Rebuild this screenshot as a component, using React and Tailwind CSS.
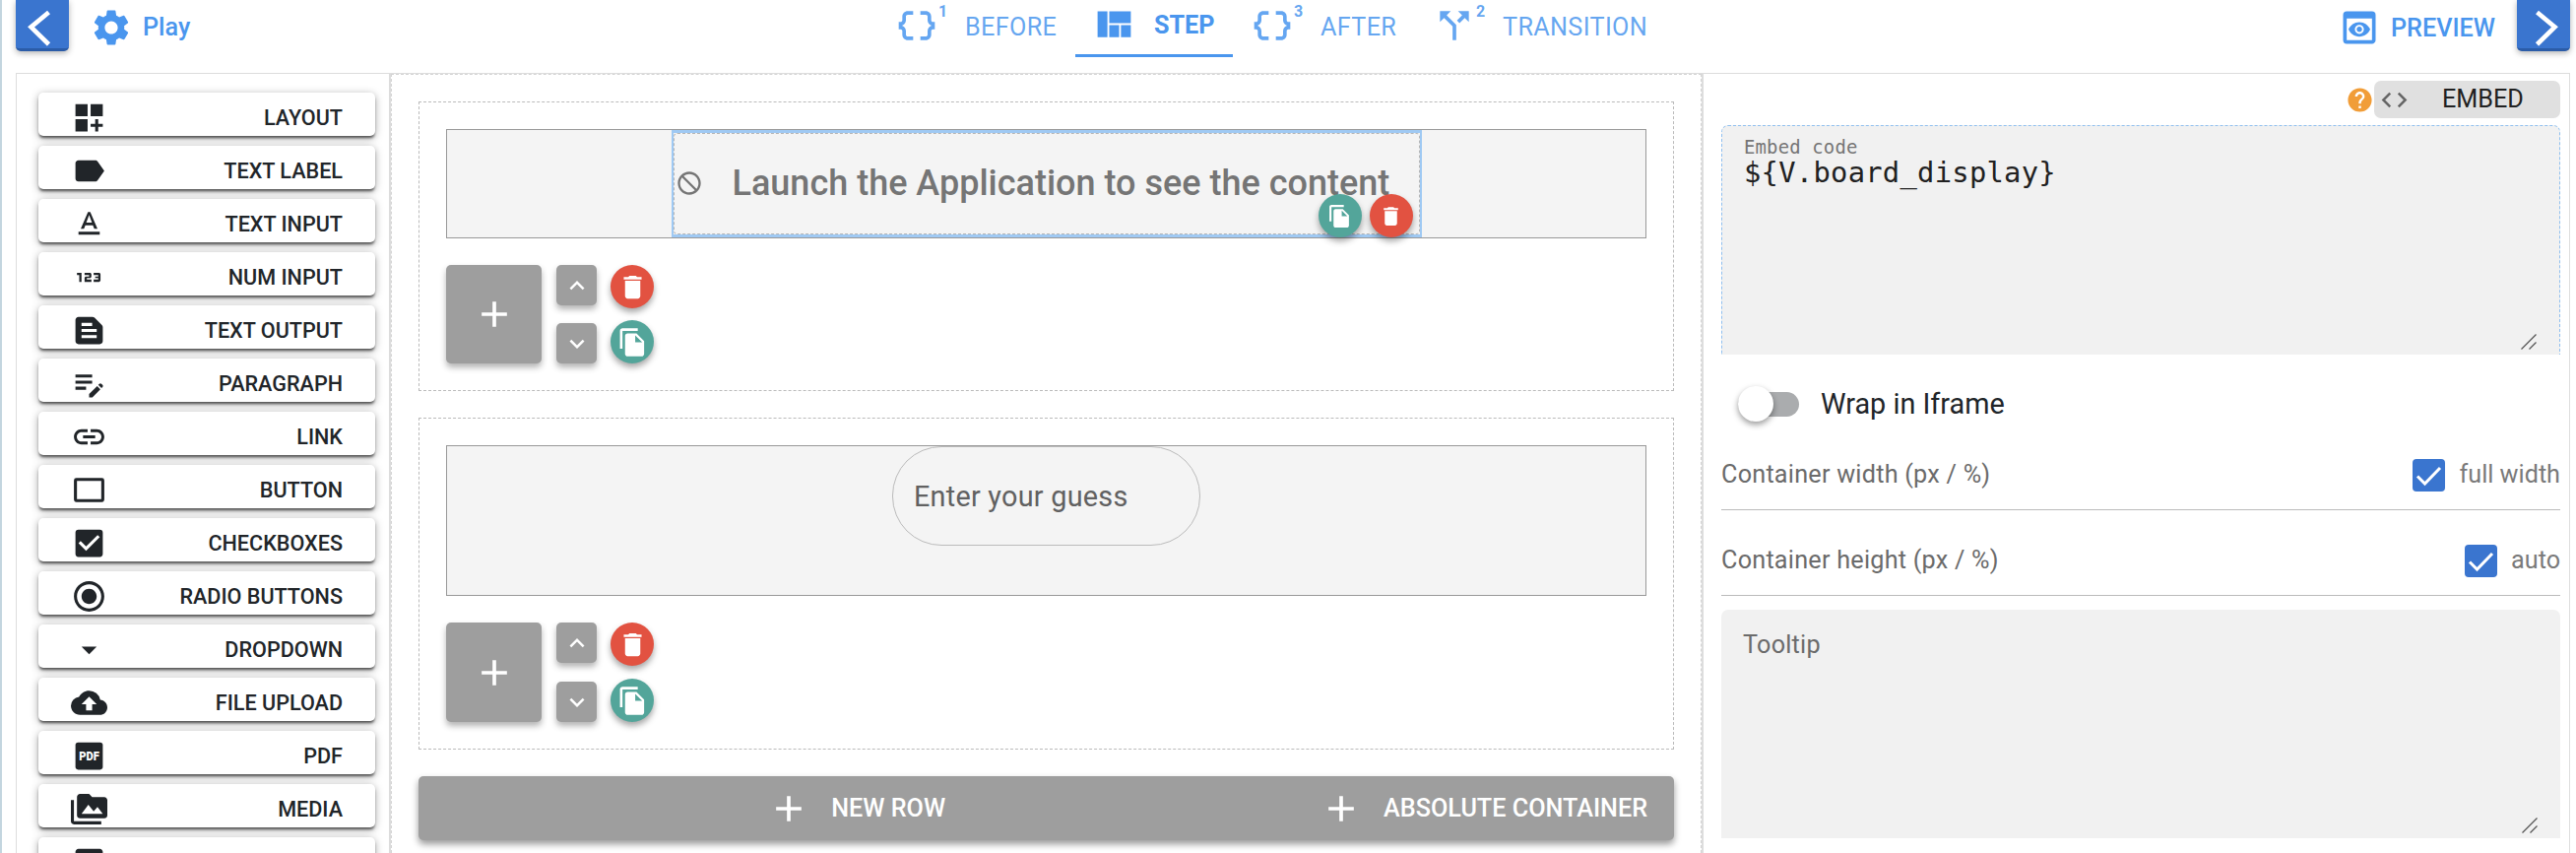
import {
    MdSettings, MdDataObject, MdViewQuilt, MdCallSplit, MdPreview, MdDashboardCustomize, MdLabel,
    MdTextFormat, Md123, MdTextSnippet, MdEditNote, MdLink, MdCheckBox, MdRadioButtonChecked,
    MdArrowDropDown, MdBackup, MdPermMedia, MdImage, MdHelp, MdCode, MdNotInterested, MdFileCopy,
    MdDelete, MdAdd, MdKeyboardArrowUp, MdKeyboardArrowDown,
} from 'react-icons/md'

function RectangleIcon({ size }) {
    return (
        <svg width={size} height={size} viewBox="0 0 24 24" fill="none" stroke="currentColor" strokeWidth="2">
            <rect x="3" y="5" width="18" height="14" rx="0.6" />
        </svg>
    )
}

function PdfIcon({ size }) {
    return (
        <svg width={size} height={size} viewBox="0 0 24 24">
            <rect x="3" y="3" width="18" height="18" rx="1.8" fill="currentColor" />
            <text x="12" y="15.1" textAnchor="middle" textLength="13.4" lengthAdjust="spacingAndGlyphs" className="fill-white font-['Roboto',sans-serif] text-[8.6px] font-black">PDF</text>
        </svg>
    )
}

const elements = [
    { label: 'LAYOUT', Icon: MdDashboardCustomize },
    { label: 'TEXT LABEL', Icon: MdLabel },
    { label: 'TEXT INPUT', Icon: MdTextFormat },
    { label: 'NUM INPUT', Icon: Md123 },
    { label: 'TEXT OUTPUT', Icon: MdTextSnippet },
    { label: 'PARAGRAPH', Icon: MdEditNote },
    { label: 'LINK', Icon: MdLink },
    { label: 'BUTTON', Icon: RectangleIcon },
    { label: 'CHECKBOXES', Icon: MdCheckBox },
    { label: 'RADIO BUTTONS', Icon: MdRadioButtonChecked },
    { label: 'DROPDOWN', Icon: MdArrowDropDown },
    { label: 'FILE UPLOAD', Icon: MdBackup },
    { label: 'PDF', Icon: PdfIcon },
    { label: 'MEDIA', Icon: MdPermMedia },
    { label: '', Icon: MdImage },
]

function NavButton({ points }) {
    return (
        <button className="h-[52px] w-[54px] rounded-b-[5px] border-b-[3px] border-[#2b5ca8] bg-[#3a75cf] shadow-[0_2px_6px_rgba(0,0,0,0.3)]">
            <svg className="mt-[3px]" width="54" height="49" viewBox="0 0 54 49" fill="none" stroke="white" strokeWidth="4.6">
                <polyline points={points} />
            </svg>
        </button>
    )
}

function Tab({ Icon, label, count, className }) {
    return (
        <div className={`flex h-[51px] items-center text-[#4a96ee]/85 ${className}`}>
            <Icon size={44} className="shrink-0" />
            <sup className="top-0 w-[27px] self-start pt-1 text-base leading-4 font-bold">{count}</sup>
            <span className="pt-1 text-[25.2px] leading-8 tracking-[0.35px]">{label}</span>
        </div>
    )
}

function Header() {
    return (
        <header className="flex h-[74px] shrink-0 items-start pl-3.5 pr-1.5">
            <NavButton points="33.5,9.5 15.5,24.5 33.5,42" />
            <div className="ml-[21px] flex h-14 w-[818px] items-center gap-2.5 text-[#4a96ee]">
                <MdSettings size={44} />
                <span className="text-[25.2px] leading-8 font-medium">Play</span>
            </div>
            <Tab Icon={MdDataObject} label="BEFORE" count="1" className="w-[183px]" />
            <div className="flex h-[58px] w-40 items-center gap-[18px] border-b-[3px] border-[#4a96ee] pb-[7px] pl-[17px] text-[#4a96ee]">
                <MdViewQuilt size={45} />
                <span className="pt-1 text-[25.2px] leading-8 font-bold">STEP</span>
            </div>
            <Tab Icon={MdDataObject} label="AFTER" count="3" className="w-[203px] pl-[18px]" />
            <Tab Icon={MdCallSplit} label="TRANSITION" count="2" />
            <div className="ml-auto flex h-14 items-center gap-2.5 text-[#4a96ee]">
                <MdPreview size={44} />
                <span className="pt-0.5 text-[25.2px] leading-8 font-medium">PREVIEW</span>
            </div>
            <div className="ml-[22px]">
                <NavButton points="20.5,9.5 38.5,24.5 20.5,42" />
            </div>
        </header>
    )
}

function Sidebar() {
    return (
        <aside className="flex w-[381px] shrink-0 flex-col gap-2.5 border-l border-r-2 border-[#ddd] border-r-[#dcdcdc] pl-[22px] pt-[19px] pr-3.5">
            {elements.map(({ label, Icon }, i) => (
                <button
                    key={i}
                    className="flex h-11 w-[342px] shrink-0 items-center justify-between rounded-[5px] bg-white pt-[7px] pr-[33px] pl-[33px] text-[#212529] shadow-[0_3px_3px_-1px_rgba(0,0,0,0.6),0_2px_9px_rgba(0,0,0,0.35)]"
                >
                    <Icon size={37} />
                    <span className="text-[21.6px] leading-7 font-medium">{label}</span>
                </button>
            ))}
        </aside>
    )
}

function RoundButton({ Icon, size, className }) {
    return (
        <button className={`flex size-11 items-center justify-center rounded-full text-white shadow-[0_4px_6px_rgba(0,0,0,0.35)] ${className}`}>
            <Icon size={size} />
        </button>
    )
}

const greyButton = 'flex items-center justify-center rounded-[5px] bg-[#9e9e9e] text-white shadow-[0_4px_6px_rgba(0,0,0,0.3)]'

function RowControls({ className }) {
    return (
        <div className={`mt-[27px] flex ${className}`}>
            <button className={`${greyButton} h-full w-[97px]`}>
                <MdAdd size={44} />
            </button>
            <div className="ml-[15px] flex flex-col justify-between">
                <button className={`${greyButton} h-[41px] w-[41px]`}>
                    <MdKeyboardArrowUp size={30} />
                </button>
                <button className={`${greyButton} h-[41px] w-[41px]`}>
                    <MdKeyboardArrowDown size={30} />
                </button>
            </div>
            <div className="ml-3.5 flex flex-col justify-between">
                <RoundButton Icon={MdDelete} size={31} className="bg-[#e25241]" />
                <RoundButton Icon={MdFileCopy} size={31} className="bg-[#53a59a]" />
            </div>
        </div>
    )
}

function Canvas() {
    return (
        <main className="w-[1331px] shrink-0 border border-b-0 border-dashed border-[#d4d4d4] px-[27px] pt-[27px]">
            <section className="h-[294px] border border-dashed border-[#bbb] px-[27px] pt-[27px]">
                <div className="flex h-[111px] justify-center border border-[#999] bg-[#f4f4f4]">
                    <div className="relative flex w-[762px] border-x-[2.5px] border-y-[3px] border-[#9fc9f3]">
                        <div className="flex w-full items-center rounded-sm border border-dashed border-[#b5b5b5] pb-0.5 pl-px text-[#757575]">
                            <MdNotInterested size={28} />
                            <span className="ml-[30px] text-[36px] leading-[42px] font-medium whitespace-nowrap">Launch the Application to see the content</span>
                        </div>
                        <div className="absolute -bottom-[3px] right-[7px] flex gap-2">
                            <RoundButton Icon={MdFileCopy} size={25} className="bg-[#53a59a]" />
                            <RoundButton Icon={MdDelete} size={25} className="bg-[#e25241]" />
                        </div>
                    </div>
                </div>
                <RowControls className="h-[100px]" />
            </section>
            <section className="mt-[27px] h-[337px] border border-dashed border-[#bbb] px-[27px] pt-[27px]">
                <div className="flex h-[153px] justify-center border border-[#999] bg-[#f4f4f4]">
                    <div className="flex h-[101px] w-[313px] items-center rounded-[50px] border border-[#bbb] pt-0.5 pl-[21px] text-[28.8px] tracking-[0.25px] text-[#616161]">
                        Enter your guess
                    </div>
                </div>
                <RowControls className="h-[101px]" />
            </section>
            <div className="mt-[27px] flex h-[65px] items-center justify-end rounded-[5px] bg-[#9e9e9e] pr-[27px] text-[25.2px] leading-8 font-medium text-white shadow-[0_4px_7px_rgba(0,0,0,0.4)]">
                <button className="mr-[380px] flex items-center gap-[21px]">
                    <MdAdd size={44} />
                    NEW ROW
                </button>
                <button className="flex items-center gap-[21px]">
                    <MdAdd size={44} />
                    ABSOLUTE CONTAINER
                </button>
            </div>
        </main>
    )
}

function ResizeHandle() {
    return (
        <svg className="absolute right-[23px] bottom-[5px]" width="16" height="16" viewBox="0 0 16 16" stroke="#555" strokeWidth="1.3">
            <path d="M0.5 15.5 15.5 0.5M8.5 15.5l7-7" />
        </svg>
    )
}

function SizeRow({ label, option, className }) {
    return (
        <div className={`flex items-center border-b border-[#bbb] text-[25.2px] leading-8 text-[#6b6b6b] ${className}`}>
            <span className="pt-0.5 tracking-[0.24px]">{label}</span>
            <span className="mt-1 ml-auto flex size-[33px] items-center justify-center rounded-[4px] bg-[#3a75cf]">
                <svg width="33" height="33" viewBox="0 0 33 33" fill="none" stroke="white" strokeWidth="3">
                    <path d="M5 17.5l7.5 7.5L28 9" />
                </svg>
            </span>
            <span className="mt-0.5 ml-3.5 text-[#7a7a7a]">{option}</span>
        </div>
    )
}

function Inspector() {
    return (
        <aside className="flex flex-1 flex-col border-r border-l-2 border-[#ddd] pr-[9px] pl-[18px]">
            <div className="mt-[7px] flex h-[38px] items-center justify-end">
                <MdHelp size={29} className="text-[#f19d38]" />
                <div className="flex h-full w-[189px] items-center rounded-[7px] bg-[#e0e0e0] pl-[5px]">
                    <MdCode size={31} className="text-[#666]" />
                    <span className="ml-[33px] text-[25.2px] leading-8 text-[#212121]">EMBED</span>
                </div>
            </div>
            <div className="relative mt-[7px] h-[233px] rounded-t-[7px] border border-b-0 border-dashed border-[#90c0f0] bg-[#f1f1f1] pt-[9px] pl-[22px] font-['DejaVu_Sans_Mono',monospace]">
                <div className="text-[18.9px] leading-6 tracking-[0.18px] text-[#757575]">Embed code</div>
                <div className="text-[28.8px] leading-7 tracking-[0.27px] text-[#212121]">{'${V.board_display}'}</div>
                <ResizeHandle />
            </div>
            <div className="mt-8 flex h-9 items-center pl-[17px]">
                <div className="flex h-[25px] w-[62px] items-center rounded-full bg-[#aaacae]">
                    <span className="size-9 rounded-full bg-white shadow-[0_3px_6px_rgba(0,0,0,0.4)]" />
                </div>
                <span className="ml-[22px] text-[28.8px] leading-9 text-[#212529]">Wrap in Iframe</span>
            </div>
            <SizeRow label="Container width (px / %)" option="full width" className="mt-[34px] h-14 pb-[18px]" />
            <SizeRow label="Container height (px / %)" option="auto" className="mt-[31px] h-14 pb-[18px]" />
            <div className="relative mt-3.5 h-[232px] rounded-t-[7px] bg-[#f1f1f1] pt-5 pl-[22px] text-[25.2px] leading-8 tracking-[0.24px] text-[#6b6b6b]">
                Tooltip
                <ResizeHandle />
            </div>
        </aside>
    )
}

export default function App() {
    return (
        <div className="flex h-[866px] w-[2616px] flex-col overflow-hidden border-l-2 border-[#c3d5df] bg-white font-['Roboto',sans-serif] text-[#212529]">
            <Header />
            <div className="mr-1.5 ml-3.5 flex h-[792px] border-t border-[#ddd]">
                <Sidebar />
                <Canvas />
                <Inspector />
            </div>
        </div>
    )
}
